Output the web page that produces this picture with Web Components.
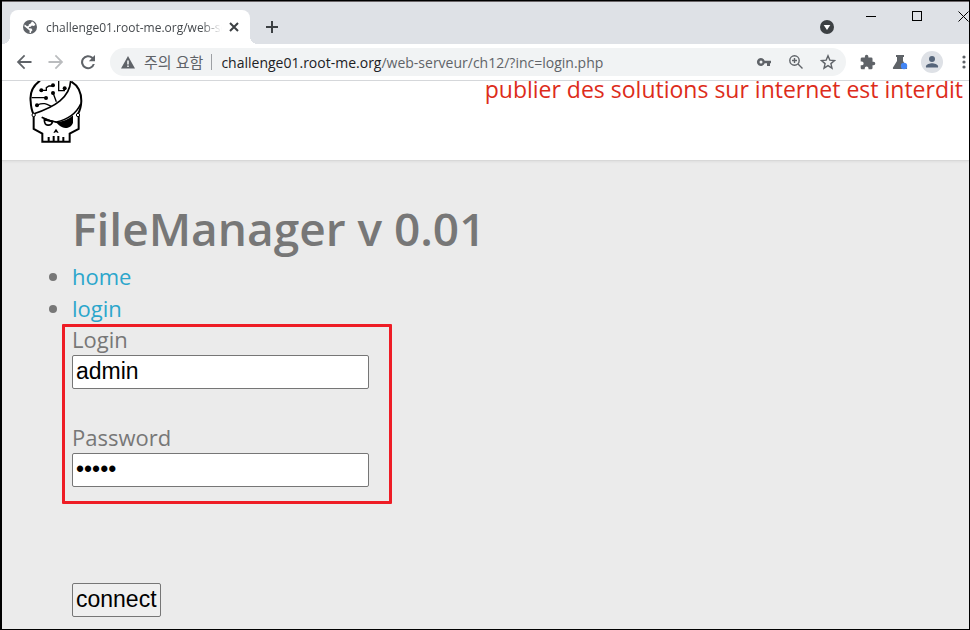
<!DOCTYPE html>
<html lang="fr">
<head>
<meta charset="utf-8">
<title>challenge01.root-me.org/web-serveur/ch12/?inc=login.php</title>
<style>
  html, body { height: 100%; margin: 0; }
  body { font-family: "Open Sans", "Noto Sans CJK KR", sans-serif; overflow: hidden; }
</style>
</head>
<body>

<browser-window>
  <tab-strip slot="tabs">
    <browser-tab>challenge01.root-me.org/web-serveur/ch12</browser-tab>
  </tab-strip>
  <tool-bar slot="toolbar">
    <address-bar>
      <span slot="status" lang="ko">주의 요함</span>
      <span slot="host">challenge01.root-me.org</span>
      <span slot="path">/web-serveur/ch12/?inc=login.php</span>
    </address-bar>
  </tool-bar>
  <site-header>publier des solutions sur internet est interdit</site-header>
  <file-manager>
    <span slot="title">FileManager v 0.01</span>
    <login-form></login-form>
  </file-manager>
</browser-window>

<script>
// Shared button look for the browser chrome
const iconButton = `
  button {
    flex: none;
    display: flex;
    align-items: center;
    justify-content: center;
    width: 28px;
    height: 28px;
    padding: 0;
    border: 0;
    background: none;
    color: #5f6368;
  }
  svg { display: block; fill: currentColor; }
`;

class BrowserWindow extends HTMLElement {
  connectedCallback() {
    this.attachShadow({ mode: 'open' });
    this.shadowRoot.innerHTML = `
      <style>
        :host {
          display: flex;
          flex-direction: column;
          box-sizing: border-box;
          height: 100%;
          border: 1px solid #000;
          border-left-width: 2px;
          background: #ebebeb;
          overflow: hidden;
        }
        main {
          flex: 1;
          overflow: hidden;
        }
      </style>
      <slot name="tabs"></slot>
      <slot name="toolbar"></slot>
      <main><slot></slot></main>
    `;
  }
}

class TabStrip extends HTMLElement {
  connectedCallback() {
    this.attachShadow({ mode: 'open' });
    this.shadowRoot.innerHTML = `
      <style>
        ${iconButton}
        :host {
          flex: none;
          display: flex;
          box-sizing: border-box;
          height: 43px;
          border-top: 1px solid #6b6669;
          background: #dee1e6;
          padding-left: 8px;
          overflow: hidden;
        }
        .add { margin: 11px auto 0 8px; color: #3c4043; }
        .search { margin: 11px 7px 0 0; color: #3c4043; }
        .caption { width: 46px; color: #000; }
        .close { margin-right: -17px; }
      </style>
      <slot></slot>
      <button class="add" aria-label="New tab">
        <svg width="12" height="12"><path d="M5 0h2v5h5v2H7v5H5V7H0V5h5z"/></svg>
      </button>
      <button class="search" aria-label="Search tabs">
        <svg width="14" height="14"><circle cx="7" cy="7" r="7"/><path fill="#fff" d="M3.700 5h6.600L7 10z"/></svg>
      </button>
      <button class="caption" aria-label="Minimize">
        <svg width="10" height="10"><path d="M0 5h10v1H0z"/></svg>
      </button>
      <button class="caption" aria-label="Maximize">
        <svg width="10" height="10"><path d="M0 0h10v10H0zM1 1v8h8V1z" fill-rule="evenodd"/></svg>
      </button>
      <button class="caption close" aria-label="Close">
        <svg width="11" height="11"><path d="M.5.5l10 10M10.500.5l-10 10" stroke="#000"/></svg>
      </button>
    `;
  }
}

class BrowserTab extends HTMLElement {
  connectedCallback() {
    this.attachShadow({ mode: 'open' });
    this.shadowRoot.innerHTML = `
      <style>
        ${iconButton}
        :host {
          flex: none;
          display: flex;
          align-items: center;
          box-sizing: border-box;
          width: 240px;
          height: 34px;
          margin-top: 8px;
          padding: 0 8px 0 12px;
          border-radius: 8px 8px 0 0;
          background: #fff;
          color: #45494d;
          font-size: 12px;
          position: relative;
        }
        /* outward curves at the foot of the tab */
        :host::before, :host::after {
          content: "";
          position: absolute;
          bottom: 0;
          width: 8px;
          height: 8px;
        }
        :host::before {
          left: -8px;
          background: radial-gradient(circle at 0 0, #dee1e6 8px, #fff 8px);
        }
        :host::after {
          right: -8px;
          background: radial-gradient(circle at 100% 0, #dee1e6 8px, #fff 8px);
        }
        .globe { flex: none; margin-right: 8px; color: #5f6368; }
        .title {
          flex: 1;
          overflow: hidden;
          white-space: nowrap;
          -webkit-mask-image: linear-gradient(90deg, #000 88%, transparent);
          mask-image: linear-gradient(90deg, #000 88%, transparent);
        }
        button { width: 16px; margin-left: 4px; color: #3c4043; }
      </style>
      <svg class="globe" width="16" height="16" viewBox="0 0 16 16">
        <circle cx="8" cy="8" r="7"/>
        <path fill="#fff" d="M10 2.500c1.600.6 2.900 1.900 3.400 3.600l-1.800.9-1.700-.6-1.200 1.300-1.700.3-.2 1.300 2.700.2 1 1.700-1.300 1.300-.3 1.600-1.300-.1v-2.400L6 10.300 2.300 7.200c.1-.6.300-1.200.5-1.600l2.200 1.600 1.500-.3.300-1.500 1.800-.8z"/>
      </svg>
      <span class="title"><slot></slot></span>
      <button aria-label="Close tab">
        <svg width="10" height="10"><path d="M1 1l8 8M9 1l-8 8" stroke="currentColor" stroke-width="2"/></svg>
      </button>
    `;
  }
}

class ToolBar extends HTMLElement {
  connectedCallback() {
    this.attachShadow({ mode: 'open' });
    this.shadowRoot.innerHTML = `
      <style>
        ${iconButton}
        :host {
          flex: none;
          display: flex;
          align-items: center;
          gap: 4px;
          box-sizing: border-box;
          height: 37px;
          padding-left: 8px;
          border-bottom: 1px solid #d5d7da;
          background: #fff;
          overflow: hidden;
        }
        slot { display: block; flex: 1; min-width: 0; margin: 0 4px; }
        .forward { color: #babcbe; }
        .avatar svg { background: #dee1e6; border-radius: 50%; color: #56657a; }
        .menu { margin-right: -9px; }
      </style>
      <button aria-label="Back">
        <svg width="16" height="16"><path d="M15.500 7H4.300l4.900-4.900L8 .8.800 8 8 15.200l1.200-1.300L4.300 9h11.200z"/></svg>
      </button>
      <button class="forward" aria-label="Forward">
        <svg width="16" height="16"><path d="M.5 7h11.200L6.800 2.100 8 .8 15.200 8 8 15.200l-1.200-1.300L11.700 9H.5z"/></svg>
      </button>
      <button aria-label="Reload">
        <svg width="16" height="16"><path d="M12.900 3.100A7 7 0 1 0 14.800 10h-2a5 5 0 1 1-1.300-5.500L8.800 7.200H15V1z"/></svg>
      </button>
      <slot></slot>
      <button aria-label="Extensions">
        <svg width="16" height="16" viewBox="1 0 23 23"><path d="M20.500 11H19V7a2 2 0 0 0-2-2h-4V3.500a2.500 2.500 0 0 0-5 0V5H4a2 2 0 0 0-2 2v3.800h1.500a2.700 2.700 0 0 1 0 5.400H2V20c0 1.100.9 2 2 2h3.800v-1.500a2.700 2.700 0 0 1 5.400 0V22H17a2 2 0 0 0 2-2v-4h1.500a2.500 2.500 0 0 0 0-5z"/></svg>
      </button>
      <button aria-label="Experiments">
        <svg width="16" height="16"><path d="M4 1h8v2h-1v4l4 6.500c.4.900 0 1.500-.8 1.500H1.800C1 15 .6 14.400 1 13.500L5 7V3H4z"/><circle cx="12" cy="12" r="3.200" fill="#4285f4"/></svg>
      </button>
      <button class="avatar" aria-label="Profile">
        <svg width="22" height="22"><circle cx="11" cy="8" r="3"/><path d="M5 16.500v-1.200c0-2 4-3 6-3s6 1 6 3v1.200z"/></svg>
      </button>
      <button class="menu" aria-label="Menu">
        <svg width="4" height="16"><circle cx="2" cy="3" r="1.600"/><circle cx="2" cy="8" r="1.600"/><circle cx="2" cy="13" r="1.600"/></svg>
      </button>
    `;
  }
}

class AddressBar extends HTMLElement {
  connectedCallback() {
    this.attachShadow({ mode: 'open' });
    this.shadowRoot.innerHTML = `
      <style>
        ${iconButton}
        :host {
          display: flex;
          align-items: center;
          gap: 4px;
          height: 28px;
          padding: 0 4px 0 10px;
          border-radius: 14px;
          background: #f1f3f4;
          color: #5f6368;
          font-size: 14px;
          white-space: nowrap;
        }
        .status {
          display: flex;
          align-items: center;
          gap: 8px;
          padding-right: 8px;
          margin-right: 5px;
          border-right: 1px solid #9da0a4;
          font: 15px/16px "Noto Sans CJK KR", sans-serif;
        }
        .url { flex: 1; overflow: hidden; outline: 0; }
        .host { color: #202124; }
      </style>
      <span class="status">
        <svg width="16" height="16"><path fill-rule="evenodd" d="M8 2l7 12.500H1zM7.200 6.500v4h1.600v-4zM7.200 11.500V13h1.600v-1.500z"/></svg>
        <slot name="status"></slot>
      </span>
      <span class="url" role="textbox" aria-label="Address"><span class="host"><slot name="host"></slot></span><slot name="path"></slot></span>
      <button aria-label="Passwords">
        <svg width="16" height="16"><path fill-rule="evenodd" d="M8.700 6.700A4 4 0 1 0 8.700 9.300H11V12h3V9.300h1V6.700zM5 6.500a1.500 1.500 0 1 1 0 3 1.500 1.500 0 0 1 0-3z"/></svg>
      </button>
      <button aria-label="Zoom">
        <svg width="16" height="16"><g fill="none" stroke="currentColor" stroke-width="1.400"><circle cx="6.500" cy="6.500" r="4.700"/><path d="M10 10l4.500 4.500M4 6.500h5M6.500 4v5"/></g></svg>
      </button>
      <button aria-label="Bookmark">
        <svg width="16" height="16"><path d="M8 1.800l1.800 4.300 4.700.4-3.600 3.100 1.100 4.600L8 11.700l-4 2.500 1.100-4.600-3.600-3.100 4.700-.4z" fill="none" stroke="currentColor" stroke-width="1.400"/></svg>
      </button>
    `;
  }
}

class SiteHeader extends HTMLElement {
  connectedCallback() {
    this.attachShadow({ mode: 'open' });
    this.shadowRoot.innerHTML = `
      <style>
        :host {
          display: flex;
          justify-content: space-between;
          align-items: flex-start;
          box-sizing: border-box;
          height: 80px;
          padding: 0 6px 0 26px;
          border-bottom: 1px solid #d8d8d8;
          box-shadow: 0 1px 2px #ddd;
          background: #fff;
        }
        p {
          margin: 0;
          color: #dd2c1a;
          font-size: 23px;
          line-height: 16px;
        }
        svg { display: block; flex: none; }
      </style>
      <!-- skull with a circuit brain, bandana and eye patch -->
      <svg width="56" height="62" viewBox="84 33 168 186" fill="none" stroke="#000" stroke-width="6" role="img" aria-label="Root Me">
        <path d="M120 32C98 48 89 70 92 94q1 24 9 40M214 35c22 13 30 35 30 58q-1 24-10 38"/>
        <path d="M212 32c-2 50-47 78-110 99M242 102c-12 26-38 46-73 54q-22-2-44-14" stroke-width="5"/>
        <path d="M101 137v40l26 14v24h82v-24l27-14v-40M146 214v-13M161 214v-16M175 214v-16M190 214v-13"/>
        <g fill="#fff" stroke-width="3"><circle cx="101" cy="135" r="5"/><circle cx="234" cy="135" r="5"/></g>
        <path d="M124 61h15V53l8-5h10M95 83h40M112 105c20-9 30-2 42 4M159 68l10 27M176 33v29h17V55" stroke-width="4"/>
        <g fill="#000" stroke="none">
          <circle cx="124" cy="61" r="6"/><circle cx="159" cy="46" r="6"/><circle cx="138" cy="84" r="6"/>
          <circle cx="111" cy="106" r="6"/><circle cx="159" cy="69" r="6"/><circle cx="194" cy="55" r="6"/>
          <path d="M126 142l46 14c18-1 34-8 47-20v22c-4 14-20 19-32 14-9-4-12-8-16-12zM168 176l8 12h-5l-3-3-3 3h-5z"/>
        </g>
        <path d="M133 149c0 22 20 20 25 6z" stroke-width="5"/>
      </svg>
      <p><slot></slot></p>
    `;
  }
}

class FileManager extends HTMLElement {
  connectedCallback() {
    this.attachShadow({ mode: 'open' });
    this.shadowRoot.innerHTML = `
      <style>
        :host {
          display: block;
          padding: 35px 70px 12px;
          color: #777;
          font-size: 22px;
          line-height: 32px;
        }
        h1 {
          margin: 0;
          font-size: 46px;
          font-weight: 600;
          line-height: 64px;
        }
        ul { margin: 0; padding: 0; }
        a { color: #2ba6cb; text-decoration: none; }
      </style>
      <h1><slot name="title"></slot></h1>
      <ul>
        <li><a href="?inc=accueil.php">home</a></li>
        <li><a href="?inc=login.php">login</a></li>
      </ul>
      <slot></slot>
    `;
  }
}

class LoginForm extends HTMLElement {
  connectedCallback() {
    this.attachShadow({ mode: 'open' });
    this.shadowRoot.innerHTML = `
      <style>
        :host { display: block; }
        form {
          display: flex;
          flex-direction: column;
          align-items: flex-start;
          gap: 96px;
        }
        .fields {
          position: relative;
          display: grid;
          gap: 33px;
        }
        /* red frame drawn round both fields */
        .fields::after {
          content: "";
          position: absolute;
          inset: 0 -23px -17px -10px;
          border: 3px solid #ee1c25;
          border-radius: 1px;
          pointer-events: none;
        }
        label { display: block; line-height: 31px; }
        input, button {
          display: block;
          box-sizing: border-box;
          height: 34px;
          padding: 0 3px 2px;
          border: 1px solid #767676;
          border-radius: 2px;
          font: 23px "Liberation Sans", Arial, sans-serif;
          color: #000;
        }
        input { width: 297px; background: #fff; outline: 0; }
        button { background: #efefef; }
      </style>
      <form>
        <div class="fields">
          <div>
            <label for="login">Login</label>
            <input id="login" type="text" value="admin">
          </div>
          <div>
            <label for="password">Password</label>
            <input id="password" type="password" value="admin">
          </div>
        </div>
        <button type="button">connect</button>
      </form>
    `;
  }
}

customElements.define('browser-window', BrowserWindow);
customElements.define('tab-strip', TabStrip);
customElements.define('browser-tab', BrowserTab);
customElements.define('tool-bar', ToolBar);
customElements.define('address-bar', AddressBar);
customElements.define('site-header', SiteHeader);
customElements.define('file-manager', FileManager);
customElements.define('login-form', LoginForm);
</script>
</body>
</html>
